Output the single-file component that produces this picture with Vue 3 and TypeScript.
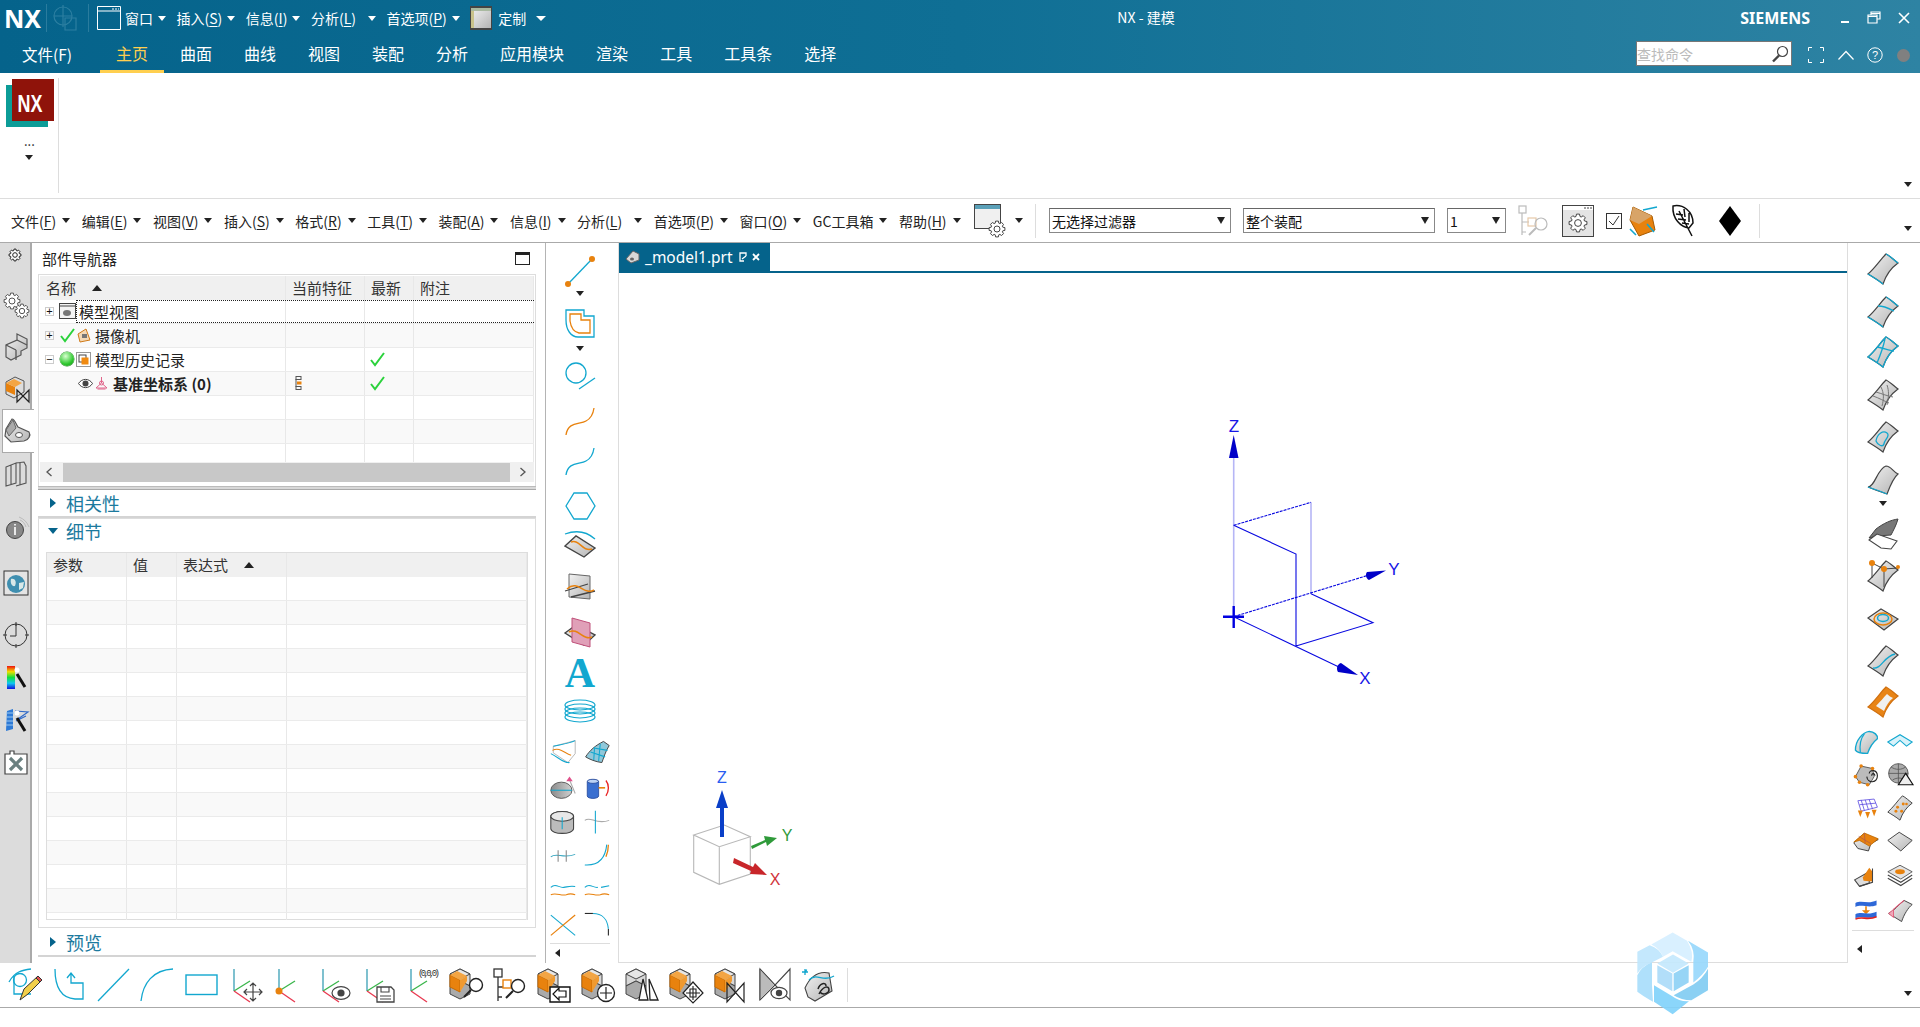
<template>
  <div class="app">
    <svg class="defs" width="0" height="0">
      <defs>
        <linearGradient id="gGray" x1="0" y1="0" x2="1" y2="1">
          <stop offset="0" stop-color="#f2f2f2" />
          <stop offset="1" stop-color="#b4b4b4" />
        </linearGradient>
        <linearGradient id="gDark" x1="0" y1="0" x2="1" y2="0">
          <stop offset="0" stop-color="#8a8a8a" />
          <stop offset="1" stop-color="#d0d0d0" />
        </linearGradient>
        <linearGradient id="gRainbow" x1="0" y1="0" x2="0" y2="1">
          <stop offset="0" stop-color="#f01010" />
          <stop offset=".25" stop-color="#f0e000" />
          <stop offset=".5" stop-color="#10e040" />
          <stop offset=".75" stop-color="#10c8f0" />
          <stop offset="1" stop-color="#1010e0" />
        </linearGradient>
      </defs>
    </svg>

    <header class="titlebar">
      <div class="title-row">
        <span class="nx-mark">NX</span>
        <i class="title-sep"></i>
        <svg class="dim-icon" width="24" height="28" viewBox="0 0 24 28" fill="none" stroke="#2c7fa1" stroke-width="1.2">
          <circle cx="10" cy="12" r="9" />
          <path d="M10 1V23M1 12H19M12 14H23V26H12Z" />
        </svg>
        <i class="title-sep"></i>
        <svg class="win-icon" width="24" height="24" viewBox="0 0 24 24" fill="none" stroke="#fff">
          <path d="M.5.5H23.5V23.5H.5ZM.5 5H23.5" />
          <path d="M15 3H17M18 3H20M21 3H22" />
        </svg>
        <div v-for="m in quickMenus" :key="m.t" class="quick" :class="{ 'far-arrow': m.t === '分析' }">
          <span>{{ m.t }}<template v-if="m.k">(<u>{{ m.k }}</u>)</template></span>
          <i class="arrow white"></i>
        </div>
        <svg class="custom-icon" width="22" height="24" viewBox="0 0 22 24">
          <rect width="22" height="24" fill="#444" />
          <rect x="1" y="2" width="20" height="20" fill="url(#gGray)" />
          <rect x="1" y="2" width="3" height="20" fill="#c9c28a" />
          <rect x="1" y="2" width="20" height="3" fill="#a9b9a0" />
        </svg>
        <span class="custom-label">定制</span>
        <i class="arrow white lined"></i>
        <span class="app-title">NX - 建模</span>
        <span class="siemens">SIEMENS</span>
        <div class="win-controls">
          <svg width="10" height="14" viewBox="0 0 10 14"><rect x="1" y="10" width="8" height="2" fill="#fff" /></svg>
          <svg width="14" height="14" viewBox="0 0 14 14" fill="none" stroke="#fff" stroke-width="1.2"><path d="M4 3.5V1H13V8H10M1 4H10V12H1ZM1 5.5H10M4 2.5H13" /></svg>
          <svg width="12" height="12" viewBox="0 0 12 12" stroke="#fff" stroke-width="1.6"><path d="M1 1L11 11M11 1L1 11" /></svg>
        </div>
      </div>
      <div class="tab-row">
        <span class="file-tab">文件(F)</span>
        <span v-for="t in ribbonTabs" :key="t" class="rtab" :class="{ active: t === '主页' }">{{ t }}</span>
        <div class="search-box">
          <span>查找命令</span>
          <svg width="18" height="18" viewBox="0 0 18 18" fill="none" stroke="#444" stroke-width="1.2">
            <circle cx="11.5" cy="6.5" r="5" />
            <path d="M8 10.5L2 16.5" stroke-width="2.4" />
          </svg>
        </div>
        <div class="tab-tools">
          <svg width="16" height="16" viewBox="0 0 16 16" fill="none" stroke="#fff"><path d="M.5 4V.5H4M12 .5H15.5V4M15.5 12V15.5H12M4 15.5H.5V12" /></svg>
          <svg width="16" height="10" viewBox="0 0 16 10" fill="none" stroke="#fff" stroke-width="1.2"><path d="M.5 9.5L8 1.5L15.5 9.5" /></svg>
          <svg width="16" height="16" viewBox="0 0 16 16" fill="none" stroke="#fff"><circle cx="8" cy="8" r="7.2" /><text x="8" y="12" font-size="11" text-anchor="middle" fill="#fff" stroke="none" font-family="Liberation Sans, sans-serif">?</text></svg>
          <i class="gray-dot"></i>
        </div>
      </div>
    </header>

    <section class="ribbon">
      <div class="logo-group">
        <div class="logo"><span>NX</span></div>
        <span class="more-dots">...</span>
        <i class="arrow"></i>
      </div>
      <i class="ribbon-sep"></i>
      <i class="arrow corner-arrow"></i>
    </section>

    <nav class="menubar">
      <div v-for="m in menuItems" :key="m.t" class="menu-item" :class="{ 'far-arrow': m.t === '分析' }">
        <span>{{ m.t }}<template v-if="m.k">(<u>{{ m.k }}</u>)</template></span>
        <i class="arrow"></i>
      </div>
      <svg class="menu-svg gear-win" width="33" height="34" viewBox="0 0 33 34" v-html="windowGear"></svg>
      <i class="arrow gear-arrow"></i>
      <i class="menu-sep"></i>
      <div class="combo combo-filter"><span>无选择过滤器</span><i class="arrow big"></i></div>
      <div class="combo combo-scope"><span>整个装配</span><i class="arrow big"></i></div>
      <div class="combo combo-layer"><span>1</span><i class="arrow big"></i></div>
      <svg class="menu-svg tree-ic" width="34" height="32" viewBox="0 0 34 32" v-html="treeFaded"></svg>
      <svg class="menu-svg set-ic" width="32" height="32" viewBox="0 0 32 32" v-html="settingsBox"></svg>
      <svg class="menu-svg chk-ic" width="16" height="16" viewBox="0 0 16 16"><rect x=".5" y=".5" width="15" height="15" fill="#fff" stroke="#333" /><path d="M3 8L7 12L13 3" fill="none" stroke="#333" /></svg>
      <svg class="menu-svg cube-ic" width="32" height="34" viewBox="0 0 32 34" v-html="orangeBlock"></svg>
      <svg class="menu-svg feather-ic" width="28" height="32" viewBox="0 0 28 32"><path d="M2 1C12 -1 22 6 22 18L18 23C10 22 1 14 2 1ZM8 6L21 31M5 9L12 10M7 14L15 15M11 18L18 19M13 4L14 12M18 8L18 17" fill="#fff" stroke="#111" stroke-width="1.5" /></svg>
      <svg class="menu-svg diamond-ic" width="22" height="30" viewBox="0 0 22 30"><path d="M11 0L22 15L11 30L0 15Z" fill="#000" /></svg>
      <i class="menu-sep last"></i>
      <i class="arrow corner-arrow"></i>
    </nav>

    <main class="main">
      <aside class="rail">
        <div v-for="r in railRows" :key="r.cy" class="rail-item" :class="{ current: r.active }" :style="{ marginTop: r.gap + 'px', height: r.h + 'px' }">
          <svg width="28" height="28" viewBox="0 0 28 28" v-html="r.svg"></svg>
        </div>
      </aside>

      <section class="navigator">
        <div class="nav-title">
          <span>部件导航器</span>
          <i class="max-box"></i>
        </div>
        <div class="nav-table">
          <div class="grid-row head nav-cols">
            <div class="cell">名称<i class="sort-up"></i></div>
            <div class="cell">当前特征</div>
            <div class="cell">最新</div>
            <div class="cell">附注</div>
          </div>
          <div class="grid-row nav-cols">
            <div class="cell tree">
              <i class="expander">+</i>
              <svg class="t1" width="17" height="16" viewBox="0 0 17 16" v-html="modelViewIcon"></svg>
              <span class="focus-label">模型视图</span>
            </div>
            <div class="cell"></div><div class="cell"></div><div class="cell"></div>
            <i class="focus-box"></i>
          </div>
          <div class="grid-row nav-cols alt">
            <div class="cell tree">
              <i class="expander">+</i>
              <svg class="t2" width="15" height="14" viewBox="0 0 15 14" v-html="checkMark"></svg>
              <svg class="t3" width="14" height="15" viewBox="0 0 14 15" v-html="cameraIcon"></svg>
              <span class="tree-label">摄像机</span>
            </div>
            <div class="cell"></div><div class="cell"></div><div class="cell"></div>
          </div>
          <div class="grid-row nav-cols">
            <div class="cell tree">
              <i class="expander">−</i>
              <i class="ball"></i>
              <svg class="t3b" width="15" height="15" viewBox="0 0 15 15" v-html="historyIcon"></svg>
              <span class="tree-label">模型历史记录</span>
            </div>
            <div class="cell"></div>
            <div class="cell"><svg class="chk" width="15" height="14" viewBox="0 0 15 14" v-html="checkMark"></svg></div>
            <div class="cell"></div>
          </div>
          <div class="grid-row nav-cols alt">
            <div class="cell tree child">
              <svg width="15" height="11" viewBox="0 0 15 11"><path d="M.5 5.5C4 0 11 0 14.5 5.5C11 11 4 11 .5 5.5Z" fill="#fff" stroke="#444" /><circle cx="7.5" cy="5.5" r="3" fill="#444" /></svg>
              <svg class="t4" width="15" height="14" viewBox="0 0 15 14" fill="none" stroke="#e0648a"><path d="M7.5 1V7M7.5 7L2 12H13L7.5 7M3.5 13H11.5" /><circle cx="7.5" cy="7" r="2" /></svg>
              <b class="tree-bold">基准坐标系 (0)</b>
            </div>
            <div class="cell"><svg class="feat" width="7" height="14" viewBox="0 0 7 14" v-html="featureMark"></svg></div>
            <div class="cell"><svg class="chk" width="15" height="14" viewBox="0 0 15 14" v-html="checkMark"></svg></div>
            <div class="cell"></div>
          </div>
          <div v-for="n in 3" :key="n" class="grid-row nav-cols" :class="{ alt: n === 2, short: n === 3 }">
            <div class="cell"></div><div class="cell"></div><div class="cell"></div><div class="cell"></div>
          </div>
          <div class="hscroll">
            <svg width="8" height="10" viewBox="0 0 8 10" fill="none" stroke="#555" stroke-width="1.3"><path d="M6.5 1L2 5L6.5 9" /></svg>
            <i class="thumb"></i>
            <svg width="8" height="10" viewBox="0 0 8 10" fill="none" stroke="#555" stroke-width="1.3"><path d="M1.5 1L6 5L1.5 9" /></svg>
          </div>
        </div>
        <i class="splitter"></i>
        <div class="group-head closed"><i class="tri-right"></i><span>相关性</span></div>
        <div class="detail-box">
          <div class="group-head detail-head"><i class="tri-down"></i><span>细节</span></div>
          <div class="detail-table">
            <div class="grid-row head det-cols">
              <div class="cell">参数</div>
              <div class="cell">值</div>
              <div class="cell">表达式<i class="sort-up"></i></div>
              <div class="cell"></div>
            </div>
            <div v-for="n in 14" :key="n" class="grid-row det-cols" :class="{ alt: n % 2 === 0 }">
              <div class="cell"></div><div class="cell"></div><div class="cell"></div><div class="cell"></div>
            </div>
            <div class="grid-row det-cols stub">
              <div class="cell"></div><div class="cell"></div><div class="cell"></div><div class="cell"></div>
            </div>
          </div>
        </div>
        <div class="group-head preview"><i class="tri-right"></i><span>预览</span></div>
      </section>

      <aside class="vtool left-tool">
        <div v-for="row in leftRows" :key="row.cy" class="vrow" :style="{ marginTop: row.gap + 'px', height: row.h + 'px' }">
          <i v-if="row.arrow" class="arrow"></i>
          <svg v-for="(s, i) in row.icons" :key="i" :width="row.size" :height="row.size" viewBox="0 0 32 32" v-html="s"></svg>
        </div>
        <i class="vtool-sep"></i>
        <i class="tri-left"></i>
      </aside>

      <section class="graphics">
        <div class="tab-strip">
          <div class="doc-tab">
            <svg width="15" height="14" viewBox="0 0 15 14"><path d="M1 9L8 1L14 4V10L6 13Z" fill="#d8d8d8" stroke="#666" /><ellipse cx="7" cy="9" rx="2" ry="1.5" fill="#666" /></svg>
            <span>_model1.prt</span>
            <svg width="8" height="10" viewBox="0 0 8 10" fill="none" stroke="#fff" stroke-width="1.3"><path d="M7 4V1H1V9H5M3 7L7 4" /></svg>
            <svg width="8" height="8" viewBox="0 0 8 8" stroke="#fff" stroke-width="1.8"><path d="M1 1L7 7M7 1L1 7" /></svg>
          </div>
        </div>
        <svg class="scene" width="1229" height="690" viewBox="618 273 1229 690">
          <g fill="none" stroke="#b6b6f6" stroke-width="1.6">
            <path d="M1232.7 616.7V450M1310 502.3V593.7" />
          </g>
          <g fill="none" stroke="#0808e0" stroke-width="1.1">
            <path d="M1232.7 525.3L1295 554V646M1232.7 616.7L1340 668M1295 646L1372 622.7L1310 593.7" />
            <path d="M1232.7 525.3L1310 502.3M1232.7 616.7L1368 575" stroke-dasharray="3 1" />
          </g>
          <path d="M1232.7 435L1228 458H1237.5Z" fill="#0000c8" />
          <path d="M1385 570.5L1366 572C1364 574 1365 579 1368 580Z" fill="#0000c8" />
          <path d="M1357 675L1340 663C1336 664 1335 669 1337 672Z" fill="#0000c8" />
          <path d="M1222 616.7H1243M1232.7 606V628" stroke="#0000e0" stroke-width="2.4" />
          <g font-family="Liberation Sans, sans-serif" font-size="17" fill="#1616e6" text-anchor="middle">
            <text x="1233" y="432">Z</text>
            <text x="1393" y="575">Y</text>
            <text x="1364" y="684">X</text>
          </g>
          <g fill="none" stroke="#b8b8b8" stroke-width="1.1">
            <path d="M692.7 835L723.3 825L749.3 836.7L718.3 846.7ZM692.7 835V872.3L718.3 884.3L749.3 874V836.7M718.3 846.7V884.3" />
          </g>
          <path d="M719 837H723V808H727L721 790L715 808H719Z" fill="#0a3fc8" />
          <path d="M750 846L764 840L763 836L776 838L766 846L765 842L751 849Z" fill="#2f9a3a" />
          <path d="M733 858L752 867L754 863L766 875L749 874L750 871L732 863Z" fill="#c8262a" />
          <g font-family="Liberation Sans, sans-serif" font-size="16" text-anchor="middle">
            <text x="721" y="783" fill="#2a5df0">Z</text>
            <text x="786" y="841" fill="#2f9a3a">Y</text>
            <text x="774" y="885" fill="#d0333a">X</text>
          </g>
        </svg>
      </section>

      <aside class="vtool right-tool">
        <div v-for="row in rightRows" :key="row.cy" class="vrow" :style="{ marginTop: row.gap + 'px', height: row.h + 'px' }">
          <i v-if="row.arrow" class="arrow"></i>
          <svg v-for="(s, i) in row.icons" :key="i" :width="row.size" :height="row.size" viewBox="0 0 32 32" v-html="s"></svg>
        </div>
        <i class="vtool-sep"></i>
        <i class="tri-left"></i>
      </aside>
    </main>

    <footer class="bottombar">
      <svg v-for="(s, i) in bottomIcons" :key="i" width="36" height="36" viewBox="0 0 36 36" v-html="s"></svg>
      <i class="bottom-sep"></i>
      <i class="arrow corner-arrow"></i>
    </footer>

    <svg class="watermark" width="80" height="87" viewBox="100 30 240 260">
      <g opacity=".92">
        <path d="M155 73L219 37L262 62Q283 95 275 125L219 93L190 110Q180 85 155 73Z" fill="#d6efff" />
        <path d="M265 62L325 97V140Q310 165 281 187V125Q287 90 265 62Z" fill="#98d9fc" />
        <path d="M325 146V210L275 240Q245 240 222 225L281 193Q310 175 325 146Z" fill="#82cdf2" />
        <path d="M268 243L219 282L163 245V195L218 228Q240 245 268 243Z" fill="#82d3fb" />
        <path d="M113 215V165Q125 140 157 125V195L160 245Q125 225 113 215Z" fill="#a9defb" />
        <path d="M113 95L150 75Q180 85 190 110L155 128Q125 140 113 160Z" fill="#c0e7fd" />
        <path d="M220 103L267 130L220 158L173 130Z" fill="#c5e9fd" />
        <path d="M173 135L218 160V213L173 187Z" fill="#acdcf9" />
        <path d="M222 160L267 135V187L222 213Z" fill="#8fd2f6" />
      </g>
    </svg>
  </div>
</template>

<script setup lang="ts">
interface Menu { t: string; k?: string }
interface Row { cy: number; h: number; gap: number; size: number; icons: string[]; arrow?: boolean }

const quickMenus: Menu[] = [
  { t: "窗口" },
  { t: "插入", k: "S" },
  { t: "信息", k: "I" },
  { t: "分析", k: "L" },
  { t: "首选项", k: "P" },
];
const ribbonTabs = ["主页", "曲面", "曲线", "视图", "装配", "分析", "应用模块", "渲染", "工具", "工具条", "选择"];
const menuItems: Menu[] = [
  { t: "文件", k: "F" },
  { t: "编辑", k: "E" },
  { t: "视图", k: "V" },
  { t: "插入", k: "S" },
  { t: "格式", k: "R" },
  { t: "工具", k: "T" },
  { t: "装配", k: "A" },
  { t: "信息", k: "I" },
  { t: "分析", k: "L" },
  { t: "首选项", k: "P" },
  { t: "窗口", k: "O" },
  { t: "GC工具箱" },
  { t: "帮助", k: "H" },
];

const C = "#12a7cf";
const O = "#e8820e";
const D = "#444";

const line = (d: string, c = C, w = 1.3) => `<path d="${d}" fill="none" stroke="${c}" stroke-width="${w}"/>`;
const fill = (d: string, f: string, s = "none", w = 1) => `<path d="${d}" fill="${f}" stroke="${s}" stroke-width="${w}"/>`;
const dot = (x: number, y: number, r = 3, c = O) => `<circle cx="${x}" cy="${y}" r="${r}" fill="${c}"/>`;

const SURF = "M1 21C8 15 13 7 19 1C23 3 27 7 31 10C24 15 19 22 16 31C11 27 6 24 1 21Z";
const EDGES = "M19 1C23 3 27 7 31 10M1 21C6 24 11 27 16 31";
const surf = (inner = "", stroke = D) => fill(SURF, "url(#gGray)", stroke, 1.2) + inner;

// stacked grey and orange block used all over the bottom bar
const block = (top = "#d8d8d8", side = "#aaa") =>
  fill("M12 2L22 7V19L12 14L2 19V7Z", top, D) +
  fill("M2 7L12 2L22 7L12 12Z", "#e6e6e6", D) +
  fill("M2 19L12 14L22 19V27L12 32L2 27Z", side, D);
const orangeCube = () =>
  block() + fill("M2 8L12 13V25L2 20Z", O, "#c86a00") + fill("M12 13L19 9V14L12 25Z", "#f09a30") + fill("M2 8L9 4L19 9L12 13Z", "#f3a544");
const csys = (inner = "") =>
  line("M7 2V24", "#3a9fb5") + line("M7 24L23 14", "#39b54a") + line("M7 24L23 35", "#e8384f") + inner;
const lens = (cx: number, cy: number) =>
  `<circle cx="${cx}" cy="${cy}" r="6.5" fill="#fff" stroke="#222" stroke-width="1.4"/>` + line(`M${cx - 5} ${cy + 5}L${cx - 12} ${cy + 12}`, "#222", 2);
const bowtie = (x: number, y: number, w: number, h: number) =>
  line(`M${x} ${y}L${x + w} ${y + h}V${y}L${x} ${y + h}Z`, "#222", 1.2);
const eye = (cx: number, cy: number, rx = 9) =>
  `<ellipse cx="${cx}" cy="${cy}" rx="${rx}" ry="${rx * 0.7}" fill="#fff" stroke="#444" stroke-width="1.2"/><circle cx="${cx}" cy="${cy}" r="${rx * 0.4}" fill="#444"/>`;

// outline of a gear with eight teeth
function gear(cx: number, cy: number, r: number, c = "#444") {
  const pts: string[] = [];
  for (let i = 0; i < 8; i++) {
    const a = (i * Math.PI) / 4;
    for (const [da, rr] of [[-0.3, 0.76], [-0.17, 1], [0.17, 1], [0.3, 0.76]]) {
      pts.push(`${(cx + Math.cos(a + da) * r * rr).toFixed(1)},${(cy + Math.sin(a + da) * r * rr).toFixed(1)}`);
    }
  }
  return `<polygon points="${pts.join(" ")}" fill="#fff" stroke="${c}" stroke-width="1"/><circle cx="${cx}" cy="${cy}" r="${(r * 0.38).toFixed(1)}" fill="#fff" stroke="${c}"/>`;
}

const windowGear =
  `<rect x=".5" y=".5" width="26" height="24" fill="#f0f0f0" stroke="#444"/><rect x="1" y="1" width="25" height="4" fill="#5aa0b8"/>` + gear(23, 25, 8);
const treeFaded =
  `<g fill="none" stroke="#bbb" stroke-width="1.2"><rect x="1" y="1" width="7" height="7"/><path d="M4 8V30M4 17H11M4 27H8"/><rect x="10" y="13" width="8" height="8" stroke="#e6c9a8"/><circle cx="23" cy="19" r="6"/><path d="M18 23L11 30" stroke-width="2"/></g>`;
const settingsBox =
  `<rect x=".5" y=".5" width="31" height="31" fill="#e4e4e4" stroke="#444"/><rect x="1" y="1" width="30" height="4" fill="#fff"/><path d="M22 3H24M25 3H27M28 3H30" stroke="#444"/>` + gear(16, 18, 9);
const orangeBlock =
  fill("M6 3L25 12L28 26L12 32L3 16Z", O, "#a65a00") + fill("M6 3L25 12L12 20L3 16Z", "#d8a468") + line("M16 6L30 3M20 20L27 28M3 25L9 31", C, 1.6);
const modelViewIcon =
  `<rect x=".5" y=".5" width="16" height="15" fill="#f4f4f4" stroke="#444"/><path d="M1 3H16" stroke="#444"/><ellipse cx="8" cy="10" rx="4" ry="3" fill="#777"/>`;
const checkMark = `<path d="M1 8L5 13L14 1" fill="none" stroke="#2bd23c" stroke-width="2"/>`;
const cameraIcon = `<path d="M1 6L9 1L13 12L3 14Z" fill="#f5d9b5" stroke="#d07a18"/><rect x="5" y="6" width="5" height="4" fill="#777"/>`;
const historyIcon = `<rect x=".5" y=".5" width="14" height="14" fill="#fff" stroke="#999"/><rect x="3" y="3" width="7" height="7" fill="#fff" stroke="#444"/><rect x="5.5" y="5.5" width="7" height="7" fill="#f08a10"/>`;
const featureMark = `<g fill="none" stroke="#555"><rect x="1" y=".5" width="5" height="3"/><rect x="1" y="10.5" width="5" height="3"/><path d="M1 3V11"/></g><rect x="2" y="5.5" width="4.5" height="3" fill="#e8820e"/>`;

// left rail: centres read off the screenshot
const railIcons: { cy: number; svg: string; active?: boolean }[] = [
  { cy: 255, svg: gear(13, 14, 6, "#222") },
  { cy: 305, svg: gear(10, 10, 8, "#555") + gear(20, 20, 7, "#555") },
  { cy: 347, svg: fill("M15 1L25 6V15L19 18V22L9 27L4 24V12L15 7Z", "url(#gGray)", "#555", 1.2) + line("M4 12L14 17M14 17V27M15 7L25 12", "#555") },
  { cy: 390, svg: fill("M13 1L22 5V16L12 22L4 18V6Z", "#ddd", "#555") + fill("M4 7L13 11V19L4 15Z", O) + fill("M4 7L12 3L20 7L13 11Z", "#f3a544") + bowtie(15, 14, 12, 12) },
  { cy: 431, active: true, svg: fill("M9 2C12 2 13 8 15 10L26 15C28 18 26 23 21 24L8 25L2 19L3 12Z", "url(#gGray)", "#555", 1.2) + fill("M3 13L10 3L13 11L6 19Z", "#aaa", "#666") + `<ellipse cx="16" cy="18" rx="3.5" ry="2.5" fill="#fff" stroke="#555"/>` },
  { cy: 473, svg: line("M4 8L14 4L14 24L4 27ZM14 4L22 3L24 7V24L14 27M9 6V26M18 3V26", "#555", 1.1) },
  { cy: 528, svg: `<circle cx="13" cy="16" r="8.5" fill="#888" stroke="#444"/><path d="M13 13V21M13 10V11.5" stroke="#fff" stroke-width="1.6"/>` + line("M17 3C22 5 25 8 27 13M18 6C21 7 23 10 24 13", "#bbb", 1) },
  { cy: 583, svg: `<rect x="2" y="2" width="24" height="24" fill="#e4e4e4" stroke="#333"/><circle cx="14" cy="15" r="9" fill="#3f8fb0"/><path d="M9 10C13 9 15 13 13 17C10 18 8 14 9 10ZM17 14L22 13L21 19L17 21Z" fill="#d8e8e8"/>` },
  { cy: 635, svg: `<circle cx="14" cy="14" r="11" fill="none" stroke="#333"/><path d="M14 3V15H8M14 1V5M14 23V27M1 14H5M23 14H27" fill="none" stroke="#333"/>` },
  { cy: 678, svg: `<rect x="5" y="2" width="8" height="23" fill="url(#gRainbow)"/>` + line("M15 10L23 23", "#111", 3) + dot(15, 6, 2.5, "#fff") },
  { cy: 721, svg: fill("M5 4L11 2L11 22L4 24Z", "#2e7ad6") + line("M4 6H14M4 10H11M4 14H11M4 18H11", "#9cc8f0", 1) + line("M13 4L26 5L16 12M14 14L24 9", "#2e68c8", 1.2) + line("M15 11L23 24", "#111", 3) + dot(15, 6, 2.5, "#fff") },
  { cy: 763, svg: `<path d="M3 5H8V2H12V5H25V25H3Z" fill="#fff" stroke="#444" stroke-width="1.2"/>` + line("M8 9L20 21M20 9L8 21", "#6a8080", 3.2) },
];

const SLOT = 28;
function stackRail() {
  let bottom = 243;
  return railIcons.map((r) => {
    const h = r.active ? 44 : SLOT;
    const top = r.cy - h / 2;
    const gap = top - bottom;
    bottom = top + h;
    return { ...r, h, gap };
  });
}
const railRows = stackRail();

type Spec = { cy: number; icons?: string[]; arrow?: boolean };
function stackTools(list: Spec[], start: number, small: number): Row[] {
  let bottom = start;
  return list.map((r) => {
    const pair = (r.icons?.length ?? 0) > 1;
    const size = pair ? small : 32;
    const h = r.arrow ? 6 : size;
    const top = r.cy - h / 2;
    const gap = top - bottom;
    bottom = top + h;
    return { cy: r.cy, h, gap, size, icons: r.icons ?? [], arrow: r.arrow };
  });
}

const sCurve = "M2 29C4 15 16 19 22 15C26 13 29 9 30 2";
const leftSpecs: Spec[] = [
  { cy: 271, icons: [line("M4 29L28 4") + dot(4, 29, 3) + dot(28, 4, 3)] },
  { cy: 293, arrow: true },
  { cy: 324, icons: [line("M2 2H20V8H30V29H14C7 29 2 22 2 12Z") + line("M6 6H17V12H26V25H15C10 24 7 20 6 13Z", O)] },
  { cy: 348.5, arrow: true },
  { cy: 378, icons: [`<circle cx="12" cy="11" r="10" fill="none" stroke="${C}" stroke-width="1.3"/>` + line("M15 27L31 16")] },
  { cy: 422, icons: [line(sCurve, O)] },
  { cy: 462, icons: [line(sCurve)] },
  { cy: 506, icons: [line("M2 16L10 3H23L31 16L23 29H10Z")] },
  { cy: 544, icons: [line("M1 6C12 2 22 3 31 11") + fill("M1 18L12 8L31 20L20 29Z", "url(#gGray)", D, 1.4) + line("M7 14C16 11 18 24 28 21", O, 1.5)] },
  { cy: 587, icons: [fill("M5 3L26 5L26 28L5 26Z", "url(#gGray)", "#666") + line("M1 20L24 13M7 26L31 20", D) + line("M3 18C14 8 20 25 30 19", O, 1.5)] },
  { cy: 631, icons: [fill("M1 18L12 10L31 20L20 30Z", "url(#gGray)", D, 1.4) + fill("M8 3L26 8V32L8 27Z", "#e0a0b8", "#c0507a", 1) + line("M5 17C14 12 19 26 28 22", O, 1.5)] },
  { cy: 673, icons: [`<text x="16" y="30" text-anchor="middle" font-family="Liberation Serif, serif" font-weight="700" font-size="42" fill="${C}">A</text>`] },
  { cy: 712, icons: [`<g fill="none" stroke="${C}" stroke-width="1.2"><ellipse cx="16" cy="9" rx="15" ry="5"/><ellipse cx="16" cy="13" rx="15" ry="5"/><ellipse cx="16" cy="17" rx="15" ry="5"/><ellipse cx="16" cy="21" rx="15" ry="5"/></g>`] },
  { cy: 752, icons: [fill("M4 9L31 2V18L22 29L4 17Z", "#fff", "#aaa") + line("M4 9C12 7 22 6 31 2") + line("M1 18C10 22 16 30 24 29") + line("M3 14C12 9 18 18 26 20", O), fill("M2 22C7 14 14 8 24 3L31 8C26 16 24 24 22 29C14 28 7 25 2 22Z", "#8fc8da", D, 1.2) + line("M8 16L26 22M12 11L29 14M13 10L12 26M20 6L18 27", C)] },
  { cy: 787, icons: [`<ellipse cx="14" cy="20" rx="13" ry="10" fill="url(#gDark)" stroke="#444"/>` + line("M1 20H27") + line("M24 7L31 24", "#aaa") + fill("M24 3L28 9H20Z", "#e0508a"), fill("M4 10C4 6 18 6 18 10V27C18 31 4 31 4 27Z", "#3a6fd0", "#24489a") + `<ellipse cx="11" cy="9" rx="7" ry="2.5" fill="#bcd2f4" stroke="#24489a"/>` + line("M18 17H26", O, 2) + line("M27 8C31 13 31 21 27 27", "#e82020", 1.6)] },
  { cy: 822, icons: [`<ellipse cx="15" cy="9" rx="14" ry="6" fill="#ddd" stroke="#444" stroke-width="1.3"/><path d="M1 9V24C1 32 29 32 29 24V9" fill="#bbb" stroke="#444" stroke-width="1.3"/><ellipse cx="15" cy="9" rx="14" ry="6" fill="#e8e8e8" stroke="#444" stroke-width="1.3"/>` + line("M15 10V25"), line("M1 14C8 8 14 20 31 14", "#aaa") + line("M14 2V30")] },
  { cy: 856, icons: [line("M1 17C8 11 16 20 31 14", "#3aa7c0") + line("M10 9V23M20 9V23", "#888"), line("M1 27C16 28 26 22 28 2", C) + line("M27 17C29 12 30 6 30 2", O, 1.6)] },
  { cy: 889, icons: [line("M1 14C7 8 11 15 17 14C23 13 25 12 31 13") + line("M1 23C8 20 14 25 20 23C25 21 28 22 31 23", O), line("M1 14C7 8 11 15 17 14M21 14L31 12") + line("M1 23C8 20 14 25 20 23C25 21 28 22 31 23", O)] },
  { cy: 924, icons: [line("M1 5L31 30") + line("M1 30L31 5", O, 1.5), line("M1 3H11", "#222") + line("M11 3C22 3 29 10 30 22") + line("M30 22V30", "#222")] },
];

const rightSpecs: Spec[] = [
  { cy: 269, icons: [surf(line(EDGES))] },
  { cy: 312, icons: [surf(line(EDGES) + line("M11 10C18 10 23 13 27 15"))] },
  { cy: 352, icons: [surf(line(SURF) + line("M10 11C17 12 22 15 27 15M18 3C16 12 13 20 10 27"))] },
  { cy: 395, icons: [surf(line("M9 13C16 15 20 17 26 18M14 8C17 14 17 20 15 27M20 6C22 12 22 17 20 26M6 17C12 19 17 22 22 24", "#777", 1))] },
  { cy: 437, icons: [surf(line("M9 20C10 13 16 9 20 12C24 15 17 19 17 23C16 26 11 25 9 20Z"))] },
  { cy: 480, icons: [fill("M1 23C8 23 10 5 19 2C24 2 26 8 31 10C26 14 23 22 20 30C14 28 8 26 1 23Z", "url(#gGray)", D, 1.2) + line("M1 23C7 25 13 27 20 30")] },
  { cy: 503, arrow: true },
  { cy: 534, icons: [fill("M2 20L9 11C17 5 24 2 31 1C29 8 26 13 24 17L10 18Z", "#777", D) + fill("M2 22L10 16L30 23L24 31L14 30Z", "#fff", D, 1.1)] },
  { cy: 576, icons: [surf() + line("M5 3V18M5 3L17 9L31 8M17 9V27", D, 1) + dot(5, 3, 3) + dot(17, 9, 3) + dot(31, 7, 2)] },
  { cy: 619, icons: [fill("M1 15L14 6L31 16L17 27Z", "url(#gGray)", D, 1.2) + `<ellipse cx="16" cy="16" rx="9" ry="6" fill="none" stroke="${O}" stroke-width="1.5"/><ellipse cx="16" cy="15" rx="5.5" ry="3.5" fill="none" stroke="${C}" stroke-width="1.5"/>`] },
  { cy: 661, icons: [surf(line("M6 23C15 24 16 12 28 9"))] },
  { cy: 702, icons: [fill(SURF, "#e88416", "#d07010", 1.2) + fill("M9 20C13 16 17 11 20 8C22 10 24 11 26 12C22 15 19 20 17 25C14 23 11 21 9 20Z", "#f0f0f0")] },
  { cy: 742, icons: [fill("M3 26C3 14 12 4 20 3C26 3 31 8 30 12C25 16 20 24 18 30C12 30 5 30 3 26Z", "url(#gGray)", C, 1.7) + line("M14 6C9 12 8 20 9 29", C, 1.5), fill("M1 16L16 7L31 16L24 21L16 14L8 21Z", "#d8f2fa", C, 1.3)] },
  { cy: 775, icons: [fill("M3 18L10 5L24 8L26 18L20 28L8 25Z", "#bbb", D) + line("M20 14C20 9 30 9 30 17C30 26 18 27 17 18M23 17C23 13 27 14 27 17", "#222", 1.4) + dot(10, 5, 2.2) + dot(24, 8, 2.2) + dot(3, 18, 2.2) + dot(8, 25, 2.2) + dot(18, 28, 2.2), `<circle cx="14" cy="14" r="12" fill="#aaa" stroke="#444"/>` + line("M2 14H26M14 2V26M5 6C10 10 18 10 23 6M7 22C12 19 18 19 21 22", "#555", 1) + fill("M23 14L32 28H14Z", "#eee", "#111", 1.4)] },
  { cy: 808, icons: [line("M6 7L26 5L30 15L10 20ZM10 6L14 19M15 6L19 18M20 6L24 17M8 12L28 10", "#5b4be0", 1) + fill("M6 19L9 27L12 19Z", O) + fill("M15 21L18 29L21 21Z", O) + fill("M23 18L26 26L29 18Z", O), surf(dot(13, 15, 1.8) + dot(20, 11, 1.8) + dot(24, 11, 1.6) + dot(11, 20, 1.8) + dot(18, 20, 1.8))] },
  { cy: 842, icons: [fill("M1 17L13 6L31 13L22 18L19 27L6 24Z", "url(#gGray)", D, 1.2) + fill("M1 16L14 5L31 12L20 21L8 14Z", O, "#c06a00") + line("M7 9L22 18M14 5L15 18", "#a55", .8), fill("M1 14L15 4L31 14L17 27Z", "url(#gGray)", D, 1.2)] },
  { cy: 875, icons: [fill("M2 22L20 12V26L8 30Z", "#ddd", D, 1.3) + fill("M12 19L20 7L24 12V24L13 23Z", O) + line("M24 8V25L8 30", D, 1.3), fill("M1 12L16 4L31 12L17 21Z", "#e4e4e4", D) + line("M1 16L17 25L31 16M1 20L17 29L31 20", D) + `<ellipse cx="16" cy="12" rx="6" ry="3" fill="${O}"/>`] },
  { cy: 911, icons: [fill("M3 6C11 2 18 8 29 3V9C18 13 11 7 3 11Z", "#2e68d8") + fill("M15 10V15H11L16 20L21 15H17V10Z", O) + fill("M3 20C11 16 18 22 29 17V23C18 27 11 21 3 25Z", "#2e68d8") + line("M3 26C11 22 18 28 29 23", "#e02020", 2), fill("M2 19C9 16 15 7 21 3L31 8C26 12 21 20 18 29Z", "url(#gGray)", D, 1.2) + fill("M2 19L8 14V24Z", "#f0a8b8", "#e05070") + line("M8 14C12 10 16 7 21 3", "#e05070")] },
];

const leftRows = stackTools(leftSpecs, 243, 26);
const rightRows = stackTools(rightSpecs, 243, 26);

const bottomIcons: string[] = [
  line("M2 15C8 4 16 3 24 2M7 8V27H24") + `<circle cx="13" cy="13" r="6.5" fill="none" stroke="${C}" stroke-width="1.3"/>` + fill("M13 33L17 22L31 9L35 13L21 27Z", "#f2cf4a", "#333") + fill("M31 9L35 13L33 15L29 11Z", "#e05050", "#333"),
  line("M4 2C4 20 10 31 24 32H32V16H20V7M16 11L20 6L24 11"),
  line("M3 34L34 2"),
  line("M2 34C4 16 14 3 34 2"),
  `<rect x="3" y="8" width="31" height="19.5" fill="none" stroke="${C}" stroke-width="1.4"/>`,
  csys(line("M26 16V34M17 25H35M23 19L26 16L29 19M23 31L26 34L29 31M20 22L17 25L20 28M32 22L35 25L32 28", D, 1.2)),
  csys(dot(7, 24, 3.5)),
  csys(eye(25, 26)),
  csys(fill("M17 20H31L34 23V35H17Z", "#fff", D, 1.3) + line("M21 20V25H29V20M20 29H31M20 32H31", D, 1.1)),
  csys(`<text x="14" y="9" font-family="Liberation Mono, monospace" font-size="9" fill="#333" textLength="22">(0,0,0)</text>`),
  orangeCube() + lens(28, 18),
  `<rect x="2" y="2" width="8" height="8" fill="#fff" stroke="#333" stroke-width="1.3"/>` + line("M6 10V34M6 20H12M6 30H10", "#333") + `<rect x="11" y="13" width="8" height="8" fill="#fff" stroke="${O}" stroke-width="1.4"/>` + lens(26, 19),
  orangeCube() + fill("M14 20H34V35H14Z", "#fff", "#111", 1.4) + line("M30 24H23V21L17 27L23 33V30H30Z", "#111", 1.2),
  orangeCube() + `<circle cx="26" cy="26" r="8.5" fill="#fff" stroke="#222" stroke-width="1.3"/>` + line("M26 20V32M20 26H32", "#222", 1.2),
  block() + fill("M19 12L24 33H15Z", "#fff", "#222", 1.3) + fill("M25 12L34 33H26Z", "#fff", "#222", 1.3),
  orangeCube() + fill("M25 15L35 26L25 36L15 26Z", "#fff", "#222", 1.2) + line("M25 19V33M18 26H32M22 22H28V30H22Z", "#222", 1.1),
  orangeCube() + bowtie(14, 16, 17, 19),
  line("M3 2V33L18 18ZM33 2V33L18 18Z", "#444", 1.1) + fill("M3 2L18 18L3 33Z", "#bbb", "#444") + eye(22, 26, 8),
  fill("M4 21C10 8 18 4 28 6L31 24L14 34L7 30Z", "url(#gGray)", D, 1.1) + line("M4 6C6 2 6 2 4 6M1 5H7M4 2V8", C) + line("M8 13C16 5 22 16 33 9") + line("M18 27C22 19 28 18 28 23C28 26 22 29 19 25M17 22C19 16 25 15 25 19", "#222", 1.5),
];
</script>

<style>
body {
  margin: 0;
  background: #fff;
}
</style>

<style scoped>
.app {
  position: relative;
  width: 1920px;
  height: 1027px;
  overflow: hidden;
  display: flex;
  flex-direction: column;
  background: #fff;
  color: #222;
  font-family: "Noto Sans CJK SC", "Noto Sans", sans-serif;
  font-size: 15px;
}
i {
  font-style: normal;
  display: block;
}
svg {
  display: block;
  flex: none;
  overflow: visible;
}
u {
  text-underline-offset: 2px;
}
.defs {
  position: absolute;
}

/* triangles */
.arrow {
  width: 0;
  height: 0;
  flex: none;
  border-left: 4px solid transparent;
  border-right: 4px solid transparent;
  border-top: 5px solid #222;
}
.arrow.white {
  border-top-color: #fff;
}
.arrow.lined {
  margin-left: 10px;
  border-left-width: 5px;
  border-right-width: 5px;
}
.arrow.big {
  border-left-width: 4.5px;
  border-right-width: 4.5px;
  border-top-width: 7px;
}

/* title bar */
.titlebar {
  height: 73px;
  flex: none;
  color: #fff;
  background: linear-gradient(90deg, #05638b 0%, #0f6f95 50%, #2e83a3 100%);
}
.title-row {
  position: relative;
  height: 36px;
  display: flex;
  align-items: center;
  padding-left: 4px;
}
.nx-mark {
  width: 37px;
  font: 700 25px "Noto Sans", sans-serif;
}
.title-sep {
  width: 1px;
  height: 28px;
  margin-left: 5px;
  background: #2a7c9e;
}
.dim-icon {
  margin-left: 6px;
  margin-right: 6px;
}
.win-icon {
  margin-left: 8px;
  margin-right: 4px;
}
.quick {
  display: flex;
  align-items: center;
  gap: 5px;
  margin-right: 10.5px;
  font-size: 14px;
  white-space: nowrap;
}
.quick.far-arrow,
.menu-item.far-arrow {
  gap: 12px;
}
.custom-label {
  margin-left: 6px;
  font-size: 14px;
}
.app-title {
  position: absolute;
  left: 1146px;
  top: 7px;
  font-size: 14px;
  transform: translateX(-50%);
}
.siemens {
  margin-left: auto;
  font: 700 16px "Noto Sans", sans-serif;
}
.win-controls {
  display: flex;
  align-items: center;
  gap: 17px;
  margin: 0 10px 0 30px;
}
.tab-row {
  height: 37px;
  display: flex;
  align-items: flex-end;
}
.file-tab {
  width: 100px;
  height: 37px;
  padding-left: 22px;
  box-sizing: border-box;
  line-height: 37px;
  font-size: 15.5px;
}
.rtab {
  padding: 0 16px;
  height: 37px;
  line-height: 35px;
  font-size: 16px;
  box-sizing: border-box;
  white-space: nowrap;
}
.rtab.active {
  color: #ffcf4f;
  border-bottom: 3px solid #ffcf4f;
}
.search-box {
  margin-left: auto;
  width: 156px;
  height: 25px;
  margin-bottom: 7px;
  box-sizing: border-box;
  background: #fff;
  border: 1px solid #777;
  display: flex;
  align-items: center;
  justify-content: space-between;
  color: #bbb;
  font-size: 14px;
  padding-right: 2px;
}
.tab-tools {
  display: flex;
  align-items: center;
  gap: 13.7px;
  height: 36px;
  margin: 0 10px 0 16px;
}
.gray-dot {
  width: 13px;
  height: 13px;
  border-radius: 50%;
  background: #808080;
}

/* ribbon */
.ribbon {
  position: relative;
  height: 126px;
  flex: none;
  display: flex;
  box-sizing: border-box;
  border-bottom: 1px solid #ddd;
}
.logo-group {
  width: 58px;
  display: flex;
  flex-direction: column;
  align-items: flex-start;
  padding-top: 6px;
}
.logo {
  width: 42px;
  height: 42px;
  margin-left: 12px;
  padding: 8px 6px 0 0;
  box-sizing: border-box;
  background: #8f130a;
  box-shadow: -6px 6px 0 #0c9c97;
  display: flex;
  align-items: center;
  justify-content: center;
  color: #fff;
  font: 700 23px "Liberation Sans", sans-serif;
}
.logo span {
  display: block;
  transform: scaleX(0.78);
}
.more-dots {
  margin: 12px 0 0 24px;
  line-height: 16px;
  font-size: 13px;
  height: 20px;
}
.logo-group .arrow {
  margin: 2px 0 0 25px;
}
.ribbon-sep {
  width: 1px;
  height: 115px;
  margin-top: 5px;
  background: #ddd;
}
.corner-arrow {
  position: absolute;
  right: 8px;
  bottom: 11px;
}

/* menu bar */
.menubar {
  position: relative;
  height: 44px;
  flex: none;
  display: flex;
  align-items: center;
  box-sizing: border-box;
  border-bottom: 1px solid #aaa;
  padding-left: 11px;
  font-size: 14px;
}
.menu-item {
  display: flex;
  align-items: center;
  gap: 6px;
  margin-right: 11.5px;
  white-space: nowrap;
}
.gear-win {
  margin-left: 2px;
}
.gear-arrow {
  margin-left: 8px;
}
.menu-sep {
  width: 1px;
  height: 34px;
  margin: 0 13px 0 12px;
  background: #ddd;
}
.menu-sep.last {
  margin: 0 0 0 18px;
}
.combo {
  height: 25px;
  box-sizing: border-box;
  border: 1px solid #888;
  border-top-color: #666;
  display: flex;
  align-items: center;
  justify-content: space-between;
  padding: 0 5px 0 2px;
  margin-right: 12px;
  font-size: 14px;
  color: #111;
}
.combo-filter {
  width: 182px;
}
.combo-scope {
  width: 192px;
}
.combo-layer {
  width: 59px;
}
.set-ic {
  margin-left: 10px;
}
.chk-ic {
  margin-left: 12px;
}
.cube-ic {
  margin-left: 5px;
}
.feather-ic {
  margin-left: 12px;
}
.diamond-ic {
  margin-left: 20px;
}

/* main */
.main {
  height: 720px;
  flex: none;
  display: flex;
}
.rail {
  width: 32px;
  flex: none;
  box-sizing: border-box;
  background: #dcdcdc;
  border-right: 2px solid #aaa;
  display: flex;
  flex-direction: column;
}
.rail-item {
  display: flex;
  align-items: center;
  padding-left: 2px;
  box-sizing: border-box;
  flex: none;
}
.rail-item.current {
  width: 32px;
  margin-left: 2px;
  padding-left: 0;
  background: #fff;
  border: 1px solid #aaa;
  border-right: none;
}

/* navigator */
.navigator {
  width: 514px;
  flex: none;
  box-sizing: border-box;
  padding: 0 9px 0 6px;
  border-right: 1px solid #b4b4b4;
}
.nav-title {
  height: 31px;
  display: flex;
  align-items: center;
  justify-content: space-between;
  padding: 0 6px 0 4px;
  box-sizing: border-box;
}
.max-box {
  width: 13px;
  height: 9px;
  border: 1px solid #222;
  border-top-width: 3px;
}
.nav-table {
  height: 212px;
  box-sizing: border-box;
  border: 1px solid #ddd;
  border-bottom: none;
  padding: 1px 1px 0;
  display: flex;
  flex-direction: column;
}
.grid-row {
  position: relative;
  height: 24px;
  flex: none;
  display: grid;
  box-sizing: border-box;
  border-bottom: 1px solid #ebebeb;
}
.nav-cols {
  grid-template-columns: 246px 79px 49px 1fr;
}
.det-cols {
  grid-template-columns: 80px 50px 110px 1fr;
}
.grid-row.head {
  background: #f0f0f0;
  border-bottom: none;
}
.grid-row.alt {
  background: #f9f9f9;
}
.grid-row.short {
  height: 18px;
  border-bottom: none;
}
.grid-row.stub {
  height: 7px;
  border-bottom: none;
}
.cell {
  display: flex;
  align-items: center;
  padding: 0 0 1px 6px;
  box-sizing: border-box;
  border-right: 1px solid #e8e8e8;
  white-space: nowrap;
  color: #333;
  min-width: 0;
}
.sort-up {
  width: 0;
  height: 0;
  margin-left: 16px;
  border-left: 5px solid transparent;
  border-right: 5px solid transparent;
  border-bottom: 6px solid #222;
}
.tree {
  padding-left: 5px;
  color: #222;
}
.expander {
  width: 9px;
  height: 9px;
  box-sizing: border-box;
  border: 1px solid #ccc;
  font-size: 11px;
  line-height: 7px;
  text-align: center;
  flex: none;
  font-family: "Liberation Sans", sans-serif;
  color: #111;
}
.t1 {
  margin-left: 5px;
}
.focus-label {
  margin-left: 3px;
}
.focus-box {
  position: absolute;
  left: 36px;
  right: 0;
  top: 0;
  bottom: 0;
  border-top: 1px dotted #222;
  border-bottom: 1px dotted #222;
  border-left: 1px dotted #222;
}
.t2 {
  margin-left: 6px;
}
.t3,
.t3b {
  margin-left: 2px;
}
.ball {
  width: 14px;
  height: 14px;
  margin-left: 6px;
  flex: none;
  border-radius: 50%;
  background: radial-gradient(circle at 40% 30%, #d8ffd0, #30c830 60%, #118811);
  box-shadow: 0 0 0 .5px #228822;
}
.tree-label {
  margin-left: 4px;
}
.child {
  padding-left: 38px;
}
.t4 {
  margin-left: 1px;
}
.tree-bold {
  margin-left: 4px;
  font-weight: 700;
}
.feat {
  margin-left: 3px;
}
.chk {
  margin-left: -1px;
}
.hscroll {
  height: 20px;
  display: flex;
  align-items: center;
  justify-content: space-between;
  background: #f0f0f0;
  padding: 0 7px 0 5px;
  gap: 4px;
}
.thumb {
  width: 447px;
  height: 19px;
  background: #c8c8c8;
}
.splitter {
  height: 4px;
  box-sizing: border-box;
  background: #d8d8d8;
  border-bottom: 1px solid #aaa;
  border-top: 1px solid #bbb;
}
.group-head {
  height: 26px;
  display: flex;
  align-items: center;
  padding-left: 12px;
  box-sizing: border-box;
  color: #1c7a9e;
  font-size: 18px;
}
.group-head span {
  margin-left: 10px;
}
.group-head.closed {
  height: 28px;
  border-bottom: 2px solid #d4d4d4;
}
.tri-right {
  width: 0;
  height: 0;
  border-top: 5px solid transparent;
  border-bottom: 5px solid transparent;
  border-left: 6px solid #05638b;
}
.tri-down {
  width: 0;
  height: 0;
  margin-left: -3px;
  border-left: 5.5px solid transparent;
  border-right: 5.5px solid transparent;
  border-top: 6px solid #05638b;
}
.tri-left {
  width: 0;
  height: 0;
  border-top: 4px solid transparent;
  border-bottom: 4px solid transparent;
  border-right: 5px solid #222;
}
.detail-box {
  height: 410px;
  box-sizing: border-box;
  border: 1px solid #ddd;
}
.detail-head {
  height: 33px;
  padding-bottom: 9px;
}
.detail-head span {
  margin-left: 8px;
}
.detail-table {
  height: 368px;
  margin: 0 7px;
  box-sizing: border-box;
  border: 1px solid #ddd;
}
.group-head.preview {
  height: 29px;
  border-bottom: 2px solid #d4d4d4;
}

/* vertical tool bars */
.vtool {
  width: 72px;
  flex: none;
  display: flex;
  flex-direction: column;
  box-sizing: border-box;
}
.left-tool {
  padding-right: 4px;
}
.right-tool {
  padding-right: 2px;
}
.vrow {
  display: flex;
  align-items: center;
  justify-content: center;
  gap: 8px;
  flex: none;
}
.vtool-sep {
  height: 1px;
  margin: 6px 4px 5px;
  background: #ddd;
}
.right-tool .vtool-sep {
  margin-bottom: 14px;
}
.vtool .tri-left {
  margin-left: 9px;
}

/* graphics window */
.graphics {
  width: 1230px;
  flex: none;
  box-sizing: border-box;
  border-left: 1px solid #ddd;
  border-right: 1px solid #ddd;
  border-bottom: 1px solid #ddd;
  display: flex;
  flex-direction: column;
}
.tab-strip {
  height: 30px;
  flex: none;
  box-sizing: border-box;
  border-bottom: 2px solid #05638b;
}
.doc-tab {
  width: 151px;
  height: 28px;
  display: flex;
  align-items: center;
  box-sizing: border-box;
  padding-left: 6px;
  gap: 5px;
  background: #05638b;
  color: #fff;
  font: 15.5px "Noto Sans", sans-serif;
}
.doc-tab span {
  margin-right: 1px;
}
.scene {
  flex: none;
}

/* bottom bar */
.bottombar {
  position: relative;
  height: 45px;
  flex: none;
  display: flex;
  align-items: center;
  gap: 8.1px;
  padding-left: 7px;
  box-sizing: border-box;
  border-bottom: 1px solid #aaa;
}
.bottom-sep {
  width: 1px;
  height: 34px;
  margin-left: 2px;
  background: #ddd;
}
.watermark {
  position: absolute;
  left: 1633px;
  top: 930px;
}
</style>
